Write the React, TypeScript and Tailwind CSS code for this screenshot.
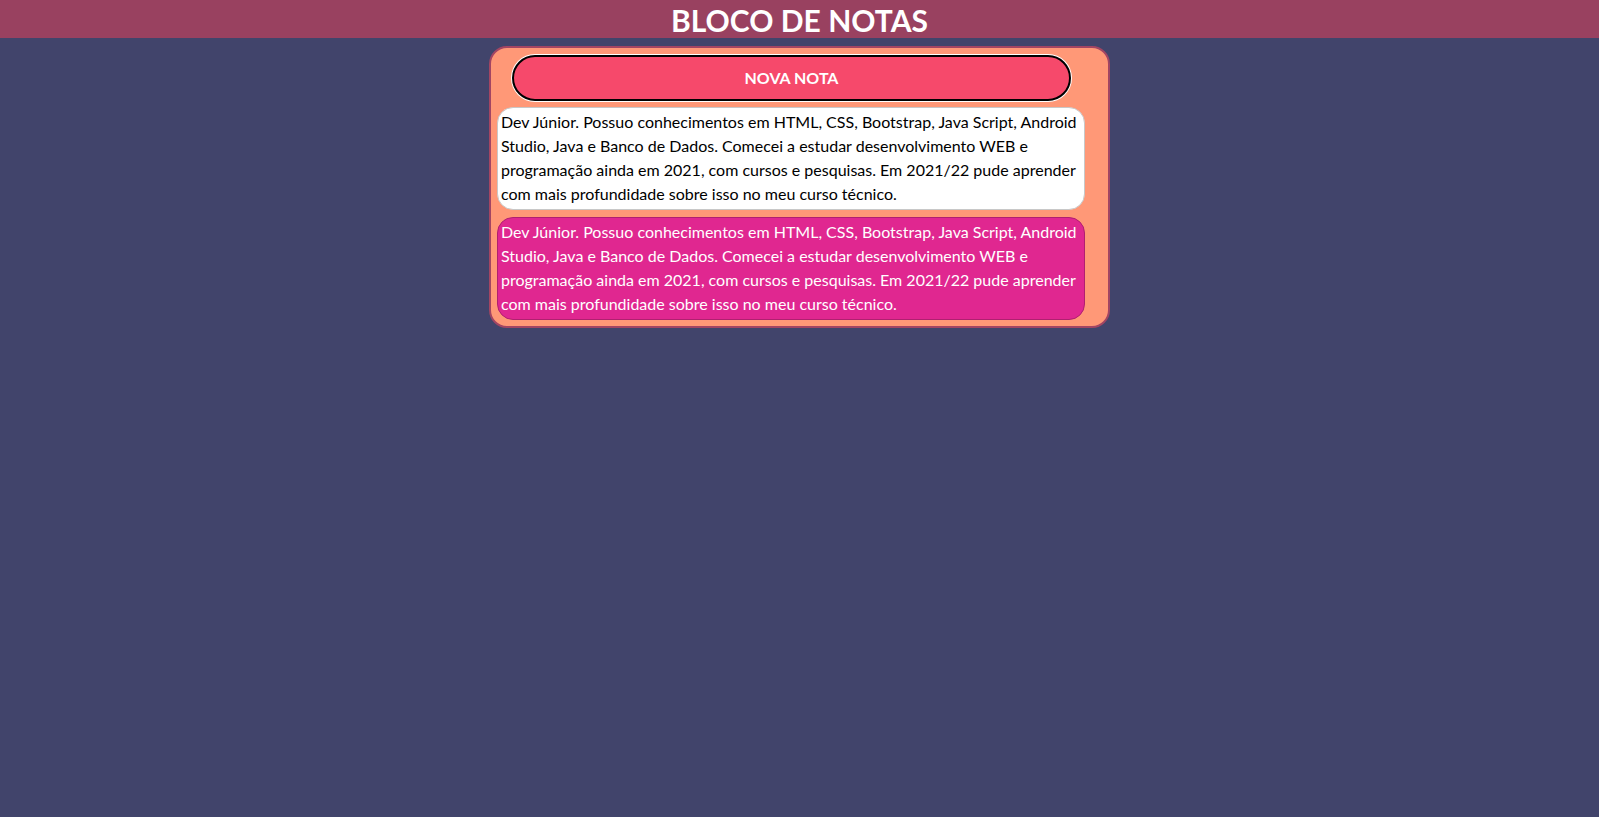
export default function App() {
  const text =
    "Dev Júnior. Possuo conhecimentos em HTML, CSS, Bootstrap, Java Script, Android Studio, Java e Banco de Dados. Comecei a estudar desenvolvimento WEB e programação ainda em 2021, com cursos e pesquisas. Em 2021/22 pude aprender com mais profundidade sobre isso no meu curso técnico.";

  return (
    <div className="min-h-screen bg-[#41446b] font-['Lato','Liberation_Sans',sans-serif]">
      {/* Header */}
      <header className="h-[38px] bg-[#994160] flex items-center justify-center">
        <h1 className="text-[30px] font-bold text-white leading-none pt-[2px]">
          BLOCO DE NOTAS
        </h1>
      </header>

      {/* Notes box */}
      <main className="flex justify-center pt-2">
        <div className="w-[621px] rounded-[18px] border-2 border-[#a24563] bg-[#ff9877] pl-[6px] pr-[23px] pt-[7px] pb-[6px] flex flex-col gap-[6px]">
          <div className="flex justify-center pl-[1px]">
            <button className="w-[559px] h-[46px] rounded-full border-2 border-black bg-[#f6496b] text-white font-bold text-[16px] shadow-[0_0_0_1px_#fff]">
              NOVA NOTA
            </button>
          </div>
          <Note text={text} className="bg-white border-[#c8c8c8] text-black" />
          <Note text={text} className="mt-[1px] bg-[#e02790] border-[#b02070] text-white" />
        </div>
      </main>
    </div>
  );
}

function Note({ text, className }: { text: string; className: string }) {
  return (
    <div
      className={`rounded-[16px] border px-[3px] pt-[2px] pb-[3px] text-[16px] leading-[24px] ${className}`}
    >
      {text}
    </div>
  );
}
